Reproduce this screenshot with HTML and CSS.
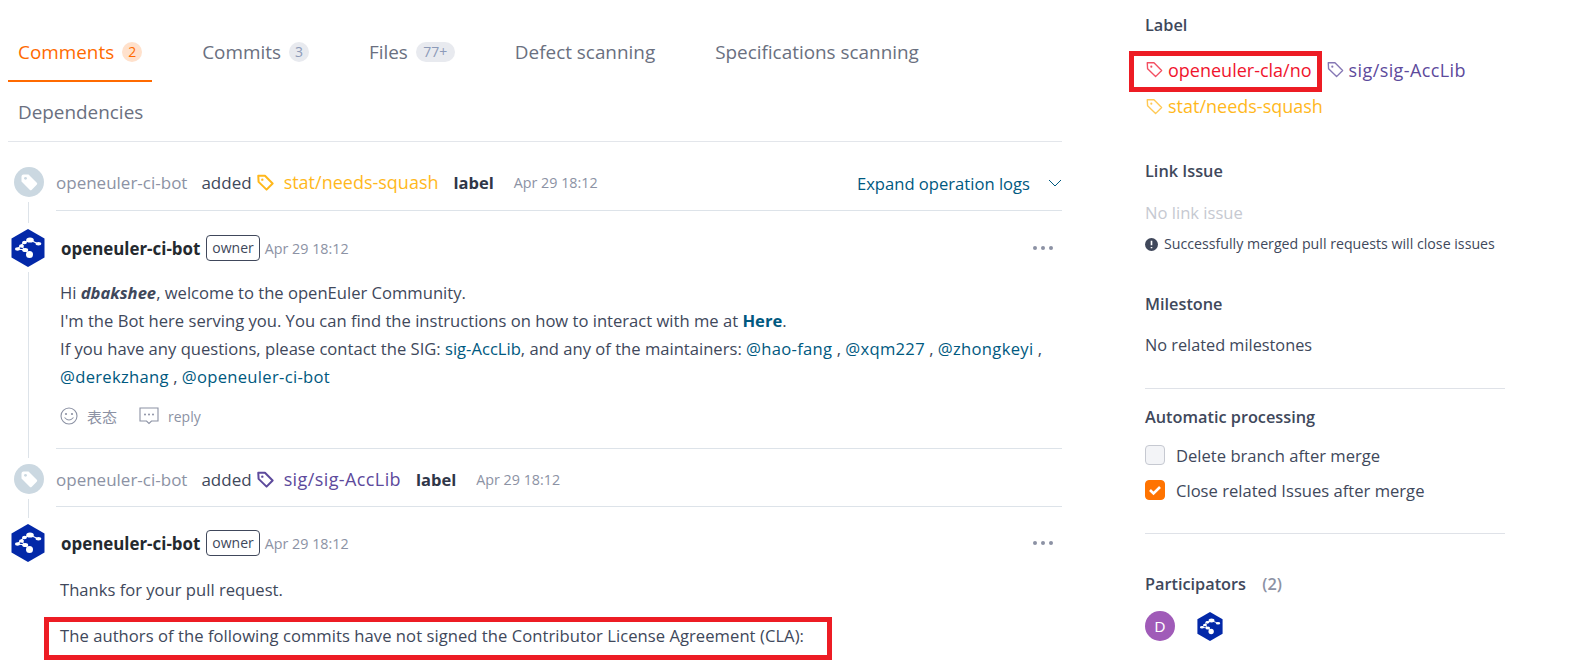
FILE: index.html
```html
<!DOCTYPE html>
<html lang="en">
<head>
<meta charset="utf-8">
<title>Pull request</title>
<link rel="stylesheet" href="styles.css">
</head>
<body>
<svg class="defs" width="0" height="0" aria-hidden="true">
  <defs>
    <symbol id="hex" viewBox="0 0 34 38">
      <path d="M17 0 33.500 9.500v19L17 38 .5 28.500v-19z" fill="#0328a8"/>
      <g fill="none" stroke="#fff" stroke-width="1.100">
        <path d="M6.500 20 13.500 13 19 11M6.500 20 14 21 18.500 25M19 11 27.500 15M10.500 17 14 21"/>
      </g>
      <g fill="#fff">
        <ellipse cx="19" cy="11" rx="3.800" ry="2.600"/>
        <ellipse cx="27.500" cy="14.800" rx="2.900" ry="1.700"/>
        <ellipse cx="13.500" cy="13.500" rx="2.400" ry="1.800"/>
        <ellipse cx="10.500" cy="17" rx="2.500" ry="1.700"/>
        <ellipse cx="6.500" cy="20" rx="2.600" ry="1.700"/>
        <ellipse cx="14.200" cy="21" rx="3" ry="2"/>
        <circle cx="18.500" cy="25.500" r="3.500"/>
      </g>
    </symbol>
    <symbol id="tag" viewBox="0 0 16 16">
      <path d="M1.200 1.700h6.300l7.200 7.300-5.700 5.700-7.500-7.300z" fill="none" stroke="currentColor" stroke-width="1.300" stroke-linejoin="round"/>
      <circle cx="5" cy="5.300" r="1" fill="currentColor"/>
    </symbol>
    <symbol id="tagbold" viewBox="0 0 16 16">
      <path d="M1.200 1.700h6.300l7.200 7.300-5.700 5.700-7.500-7.300z" fill="none" stroke="currentColor" stroke-width="1.900" stroke-linejoin="round"/>
      <circle cx="5" cy="5.300" r="1.100" fill="currentColor"/>
    </symbol>
    <symbol id="tagfill" viewBox="0 0 30 30">
      <circle cx="15" cy="15" r="15" fill="#cbd8e1"/>
      <path d="M7.500 9.500q0-2 2-2h5l8.300 8.200q1 1-.1 2.100l-4.900 4.900q-1.100 1-2.100 0L7.500 14.500z" fill="#fff"/>
      <circle cx="11.500" cy="11.300" r="1.400" fill="#cbd8e1"/>
    </symbol>
  </defs>
</svg>
<div class="page">
  <main class="main">
    <nav class="tabs">
      <a class="tab tab-active">Comments <span class="count count-active">2</span></a>
      <a class="tab">Commits <span class="count">3</span></a>
      <a class="tab">Files <span class="count count-wide">77+</span></a>
      <a class="tab">Defect scanning</a>
      <a class="tab">Specifications scanning</a>
      <a class="tab">Dependencies</a>
    </nav>

    <section class="item event first">
      <div class="gutter">
        <svg class="event-icon"><use href="#tagfill"/></svg>
        <span class="rail rail-short"></span>
      </div>
      <div class="event-body">
        <span class="actor">openeuler-ci-bot</span>
        <span class="verb">added</span>
        <svg class="tag-icon yellow"><use href="#tagbold"/></svg>
        <span class="label-name yellow">stat/needs-squash</span>
        <b class="label-word">label</b>
        <span class="time">Apr 29 18:12</span>
        <a class="expand">Expand operation logs
          <svg class="chevron" viewBox="0 0 14 8"><path d="M1 1l6 6 6-6" fill="none" stroke="#005980" stroke-width="1"/></svg>
        </a>
      </div>
    </section>

    <section class="item comment">
      <div class="gutter">
        <svg class="avatar"><use href="#hex"/></svg>
        <span class="rail"></span>
      </div>
      <div class="comment-body ruled">
        <header class="comment-head">
          <b class="author">openeuler-ci-bot</b>
          <span class="badge">owner</span>
          <span class="time">Apr 29 18:12</span>
          <span class="dots"><i></i><i></i><i></i></span>
        </header>
        <p class="para first-para">Hi <b><em>dbakshee</em></b>, welcome to the openEuler Community.<br>
        I'm the Bot here serving you. You can find the instructions on how to interact with me at <a class="link"><b>Here</b></a>.<br>
        If you have any questions, please contact the SIG: <a class="link">sig-AccLib</a>, and any of the maintainers: <a class="link mention">@hao-fang</a> , <a class="link mention">@xqm227</a> , <a class="link mention">@zhongkeyi</a> ,<br>
        <a class="link mention">@derekzhang</a> , <a class="link mention">@openeuler-ci-bot</a></p>
        <div class="actions">
          <svg class="act-icon smile" viewBox="0 0 18 18"><g fill="none" stroke="#8c92a4" stroke-width="1.100"><circle cx="9" cy="9" r="8"/><path d="M4.500 10.500q4.500 5 9 0"/></g><circle cx="6" cy="7" r="1.100" fill="#8c92a4"/><circle cx="12" cy="7" r="1.100" fill="#8c92a4"/></svg>
          <span class="act-text cjk">表态</span>
          <svg class="act-icon bubble" viewBox="0 0 20 18"><path d="M1 1h18v13h-6.500l-2.500 2.500L7.500 14H1z" fill="none" stroke="#8c92a4" stroke-width="1.100"/><g fill="#8c92a4"><circle cx="6" cy="7.500" r="1"/><circle cx="10" cy="7.500" r="1"/><circle cx="14" cy="7.500" r="1"/></g></svg>
          <span class="act-text">reply</span>
        </div>
      </div>
    </section>

    <section class="item event second">
      <div class="gutter">
        <svg class="event-icon"><use href="#tagfill"/></svg>
        <span class="rail rail-short"></span>
      </div>
      <div class="event-body">
        <span class="actor">openeuler-ci-bot</span>
        <span class="verb">added</span>
        <svg class="tag-icon purple"><use href="#tagbold"/></svg>
        <span class="label-name purple">sig/sig-AccLib</span>
        <b class="label-word">label</b>
        <span class="time">Apr 29 18:12</span>
      </div>
    </section>

    <section class="item comment">
      <div class="gutter">
        <svg class="avatar"><use href="#hex"/></svg>
      </div>
      <div class="comment-body">
        <header class="comment-head">
          <b class="author">openeuler-ci-bot</b>
          <span class="badge">owner</span>
          <span class="time">Apr 29 18:12</span>
          <span class="dots"><i></i><i></i><i></i></span>
        </header>
        <p class="para thanks">Thanks for your pull request.</p>
        <p class="para marked">The authors of the following commits have not signed the Contributor License Agreement (CLA):</p>
      </div>
    </section>
  </main>

  <aside class="side">
    <h3 class="side-title">Label</h3>
    <div class="labels">
      <span class="side-label red boxed"><svg class="tag-icon"><use href="#tag"/></svg>openeuler-cla/no</span>
      <span class="side-label purple"><svg class="tag-icon"><use href="#tag"/></svg>sig/sig-AccLib</span>
      <span class="side-label yellow"><svg class="tag-icon"><use href="#tag"/></svg>stat/needs-squash</span>
    </div>

    <h3 class="side-title link-issue">Link Issue</h3>
    <p class="side-text muted">No link issue</p>
    <p class="hint"><svg class="hint-icon" viewBox="0 0 12 12"><circle cx="6" cy="6" r="6" fill="#40485b"/><path d="M6 2.500v4.200M6 8.200v1.300" stroke="#fff" stroke-width="1.500"/></svg>Successfully merged pull requests will close issues</p>

    <h3 class="side-title milestone">Milestone</h3>
    <p class="side-text related">No related milestones</p>

    <hr class="rule rule-one">

    <h3 class="side-title">Automatic processing</h3>
    <label class="check check-first"><span class="box"></span>Delete branch after merge</label>
    <label class="check"><span class="box box-on"><svg viewBox="0 0 14 12"><path d="M2 6l3.500 3.500L12 3" fill="none" stroke="#fff" stroke-width="2.600"/></svg></span>Close related Issues after merge</label>

    <hr class="rule rule-two">

    <h3 class="side-title">Participators <span class="part-count">(2)</span></h3>
    <div class="people">
      <span class="person">D</span>
      <svg class="person-hex"><use href="#hex"/></svg>
    </div>
  </aside>
</div>
</body>
</html>
```
FILE: styles.css
```css
* { box-sizing: border-box; }
html, body { margin: 0; padding: 0; background: #fff; }
body { font-family: "Open Sans", "Noto Sans CJK SC", sans-serif; color: #40485b; font-size: 16.6px; }
.defs { display: block; height: 0; }
.page { display: flex; padding-left: 8px; align-items: flex-start; }
.main { width: 1054px; padding-top: 22px; flex: none; }
.side { width: 360px; margin-left: 83px; flex: none; padding-top: 13px; }

.tabs { display: flex; flex-wrap: wrap; column-gap: 40px; border-bottom: 1px solid #e3e6eb; height: 120px; margin-bottom: 25px; }
.tab { height: 60px; padding: 0 10px; display: flex; align-items: center; font-size: 18.9px; color: #6a7080; white-space: nowrap; }
.tab-active { color: #ff6a00; border-bottom: 2px solid #ff6a00; padding-top: 2px; }
.count { display: inline-block; height: 20px; line-height: 20px; min-width: 20px; padding: 0 6px; margin-left: 8px; border-radius: 10px; background: #e8eaef; color: #8c9ab8; font-size: 14px; text-align: center; }
.count-active { background: #ffe1cc; color: #ff6a00; padding: 0 5px; }
.count-wide { padding: 0 7.5px; }

.item { display: flex; }
.gutter { width: 40px; flex: none; display: flex; flex-direction: column; align-items: center; margin-right: 8px; }
.rail { flex: 1; width: 1px; background: #dde3e9; margin-top: 5px; margin-bottom: 6px; }
.event-icon { width: 30px; height: 30px; flex: none; display: block; margin-left: 2px; }
.event.first { height: 62px; }
.event.second { height: 60px; }
.event-body { flex: 1; display: flex; align-items: center; height: 44px; padding-bottom: 12px; border-bottom: 1px solid #dde3e9; }
.second .event-body { height: 43px; padding-bottom: 11px; }
.actor { color: #8c92a4; font-size: 17px; }
.verb { margin-left: 14px; font-size: 17px; }
.tag-icon { width: 17px; height: 17px; margin-left: 5px; flex: none; }
.yellow { color: #ffb81c; }
.purple { color: #5d4a9c; }
.red { color: #f0142d; }
.label-name { margin-left: 10px; font-size: 18px; margin-bottom: 2px; }
.second .label-name { letter-spacing: .4px; }
.label-word { margin-left: 15px; font-size: 16.5px; color: #2f3648; }
.time { margin-left: 20px; color: #8c92a4; font-size: 14.3px; }
.expand { margin-left: auto; color: #005980; font-size: 16.6px; display: flex; align-items: center; margin-top: 1px; }
.chevron { width: 14px; height: 8px; margin-left: 18px; }

.avatar { width: 34px; height: 38px; flex: none; display: block; }
.comment-body { flex: 1; min-width: 0; }
.ruled { border-bottom: 1px solid #dde3e9; margin-bottom: 15px; padding-bottom: 20px; }
.comment-head { display: flex; align-items: center; height: 38px; padding-left: 5px; }
.author { font-size: 16.9px; color: #24292e; }
.badge { margin-left: 6px; height: 26px; line-height: 24px; padding: 0 5px; border: 1px solid #40485b; border-radius: 4px; font-size: 14px; color: #40485b; }
.comment-head .time { margin-left: 5px; }
.dots { margin-left: auto; margin-right: 9px; display: flex; gap: 4px; }
.dots i { width: 4px; height: 4px; border-radius: 50%; background: #8c92a4; }
.para { margin: 0; font-size: 16.6px; line-height: 28px; padding-left: 4px; white-space: nowrap; }
.first-para { margin-top: 12px; }
.thanks { margin-top: 14px; }
.link { color: #005980; }
.mention { letter-spacing: .3px; }
.actions { display: flex; align-items: center; height: 24px; margin-top: 13px; padding-left: 4px; }
.act-icon { flex: none; }
.smile { width: 18px; height: 18px; }
.bubble { width: 20px; height: 18px; margin-left: 22px; }
.act-text { color: #8c92a4; font-size: 14px; margin-left: 9px; }
.marked { margin-top: 13px; margin-left: -12px; width: 788px; padding: 0 0 5px 11px; border: 5px solid #ed1c24; letter-spacing: .05px; }

.side-title { margin: 0; font-size: 16.3px; font-weight: 600; color: #40485b; line-height: 24px; }
.part-count { color: #8c92a4; margin-left: 12px; }
.labels { display: flex; flex-wrap: wrap; margin-top: 14px; margin-left: -16px; align-items: center; width: 376px; }
.side-label { display: flex; align-items: center; font-size: 18px; height: 28px; margin-right: 4px; }
.labels .tag-icon { margin-right: 5px; margin-left: 0; opacity: .75; }
.boxed { height: 41px; border: 5px solid #ed1c24; padding: 0 5px 4px 12px; }
.labels .purple { height: 41px; padding-bottom: 4px; margin-right: 22px; margin-left: 1px; letter-spacing: .4px; }
.labels .yellow { margin-left: 17px; }
.link-issue { margin-top: 39px; }
.side-text { margin: 0; font-size: 16.3px; line-height: 24px; }
.muted { color: #c6c9d1; margin-top: 18px; font-size: 16.6px; }
.hint { margin: 7px 0 0; font-size: 14.2px; line-height: 24px; display: flex; align-items: center; white-space: nowrap; }
.hint-icon { width: 13px; height: 13px; margin-right: 6px; flex: none; }
.milestone { margin-top: 36px; }
.related { margin-top: 17px; }
.rule { border: 0; border-top: 1px solid #dfe2e8; margin: 0; }
.rule-one { margin: 31px 0 16px; }
.check { display: flex; align-items: center; height: 20px; font-size: 16.6px; }
.check-first { margin-top: 16px; margin-bottom: 15px; }
.box { width: 20px; height: 20px; border-radius: 4px; border: 1px solid #c6c9d1; background: #f3f4f7; margin-right: 11px; flex: none; display: flex; align-items: center; justify-content: center; }
.box-on { background: #ff7300; border-color: #ff7300; }
.box-on svg { width: 14px; height: 12px; }
.rule-two { margin: 33px 0 38px; }
.people { display: flex; margin-top: 15px; align-items: center; }
.person { width: 30px; height: 30px; border-radius: 50%; background: #a05bb8; color: #fff; font-family: "Liberation Sans", sans-serif; font-size: 15px; display: flex; align-items: center; justify-content: center; }
.person-hex { width: 26px; height: 29px; margin-left: 22px; }
.cjk { font-size: 15px; }
```
